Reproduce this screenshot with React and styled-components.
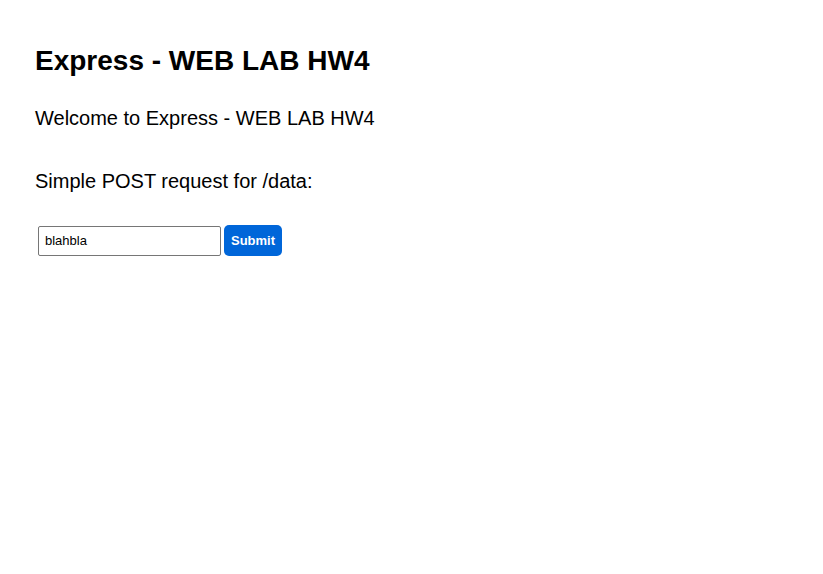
import React from 'react';
import styled, { createGlobalStyle } from 'styled-components';

const GlobalStyle = createGlobalStyle`
  html, body {
    margin: 0;
    padding: 0;
    background: #ffffff;
  }

  body {
    font-family: "Liberation Sans", Arial, Helvetica, sans-serif;
    color: #000000;
  }
`;

const Page = styled.main`
  display: flex;
  flex-direction: column;
  align-items: flex-start;
  padding: 45px 35px 0;
`;

const Title = styled.h1`
  margin: 0;
  font-size: 28px;
  font-weight: 700;
  line-height: 32px;
`;

const Text = styled.p`
  margin: ${(props) => props.$gap}px 0 0;
  font-size: 20px;
  line-height: 23px;
`;

const Form = styled.form`
  display: flex;
  align-items: center;
  gap: 3px;
  margin: 32px 0 0 3px;
`;

const Input = styled.input`
  box-sizing: border-box;
  width: 183px;
  height: 30px;
  padding: 0 6px;
  border: 1px solid #767676;
  border-radius: 2px;
  font-family: "Liberation Sans", Arial, sans-serif;
  font-size: 13px;
  color: #000000;
  background: #ffffff;
  outline: none;
`;

const Button = styled.button`
  box-sizing: border-box;
  height: 31px;
  padding: 0 7px;
  border: none;
  border-radius: 5px;
  background: #0066d9;
  color: #ffffff;
  font-family: "Liberation Sans", Arial, sans-serif;
  font-size: 13px;
  font-weight: 700;
  cursor: pointer;
`;

const App = () => {
  return (
    <>
      <GlobalStyle />
      <Page>
        <Title>Express - WEB LAB HW4</Title>
        <Text $gap={30}>Welcome to Express - WEB LAB HW4</Text>
        <Text $gap={40}>Simple POST request for /data:</Text>
        <Form onSubmit={(e) => e.preventDefault()}>
          <Input type="text" name="data" defaultValue="blahbla" />
          <Button type="submit">Submit</Button>
        </Form>
      </Page>
    </>
  );
};

export default App;
